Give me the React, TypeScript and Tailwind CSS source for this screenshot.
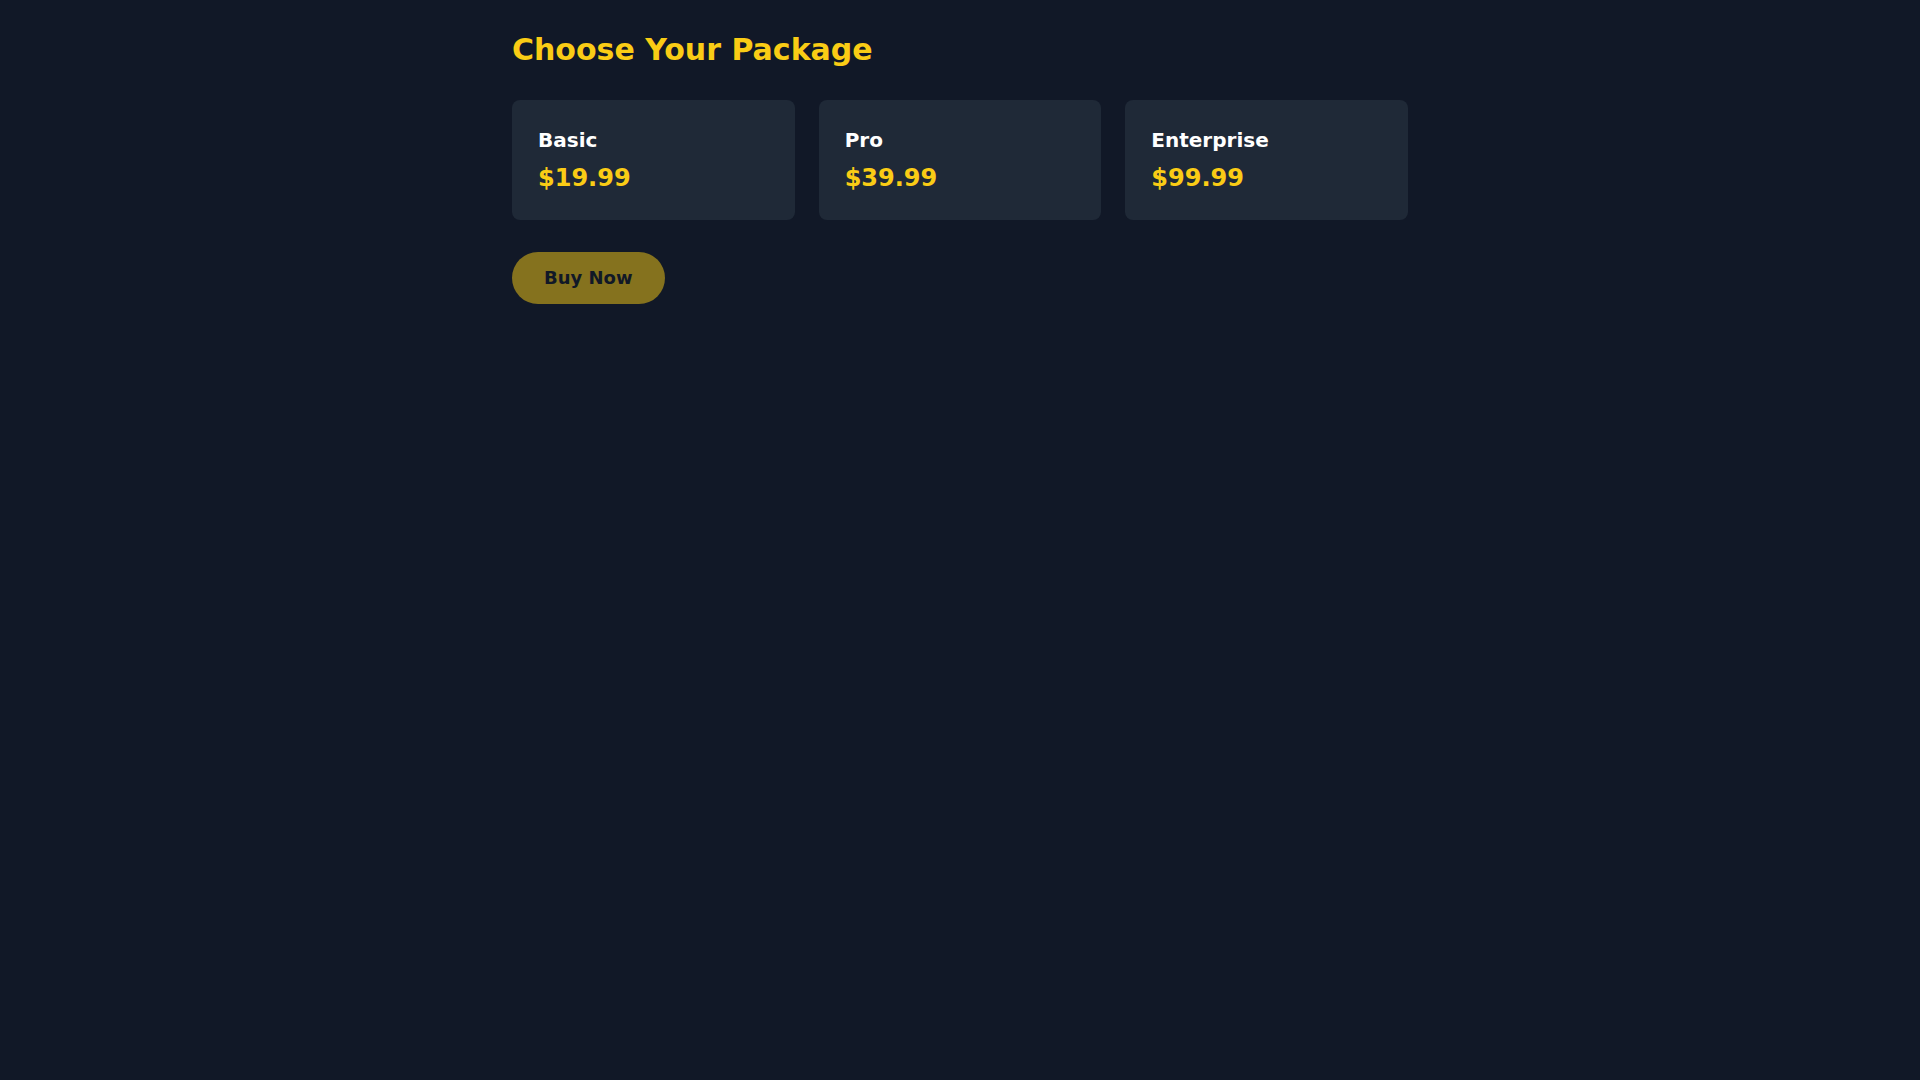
export default function App() {
  const packages = [
    { name: "Basic", price: "$19.99" },
    { name: "Pro", price: "$39.99" },
    { name: "Enterprise", price: "$99.99" },
  ];
  return (
    <div
      className="min-h-screen bg-[#111827] p-8"
      style={{ fontFamily: '"DejaVu Sans", sans-serif' }}
    >
      <div className="mx-auto max-w-4xl">
        <h1 className="mb-8 text-3xl font-bold text-[#facc15]">Choose Your Package</h1>
        <div className="mb-8 grid grid-cols-3 gap-6">
          {packages.map((p) => (
            <div key={p.name} className="rounded-lg bg-[#1f2937] p-[26px]">
              <h2 className="mb-2 text-xl font-bold text-white">{p.name}</h2>
              <p className="text-2xl font-bold text-[#facc15]">{p.price}</p>
            </div>
          ))}
        </div>
        <button className="rounded-full bg-[#facc15]/50 px-8 py-3 text-lg font-bold text-[#111827]">
          Buy Now
        </button>
      </div>
    </div>
  );
}
